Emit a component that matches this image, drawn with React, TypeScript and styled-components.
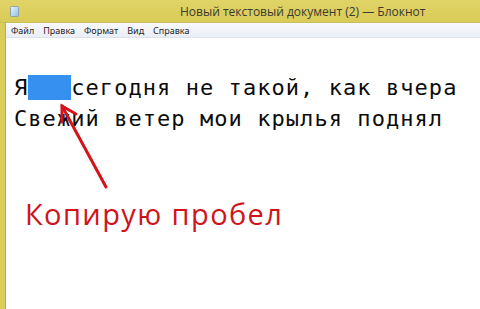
import React from "react";
import styled, { createGlobalStyle } from "styled-components";

const GlobalStyle = createGlobalStyle`
  html, body {
    margin: 0;
    padding: 0;
    background: #fff;
  }
`;

const Window = styled.div`
  position: relative;
  width: 480px;
  height: 309px;
  overflow: hidden;
  display: flex;
  flex-direction: column;
  background: #dacd5c;
`;

const TitleBar = styled.div`
  height: 22px;
  display: flex;
  align-items: center;
  padding-left: 10px;
  background: linear-gradient(#e0d468, #d9cb57);
  border-bottom: 1px solid #c9bd5c;
  font-family: "Open Sans", "Noto Sans", sans-serif;
  font-size: 12px;
  color: #3a3a30;
`;

const Title = styled.span`
  margin-left: 161px;
  white-space: nowrap;
`;

const Client = styled.div`
  flex: 1;
  margin-left: 5px;
  border-left: 1px solid #a6aa8a;
  display: flex;
  flex-direction: column;
  background: #fff;
`;

const MenuBar = styled.div`
  height: 14px;
  display: flex;
  align-items: center;
  padding-left: 1px;
  background: linear-gradient(#f8f9fb, #eaeef5);
  border-bottom: 1px solid #dde2ea;
  font-family: "Noto Sans", "Open Sans", sans-serif;
  font-size: 9px;
  color: #1e1e1e;
`;

const MenuItem = styled.span`
  padding: 0 4px;
  margin-right: 1px;
`;

const Editor = styled.div`
  flex: 1;
  padding: 34px 0 0 8px;
`;

const Line = styled.div`
  font-family: "DejaVu Sans Mono", "Liberation Mono", monospace;
  font-size: 22px;
  letter-spacing: 1.06px;
  line-height: 31px;
  height: 31px;
  white-space: pre;
  color: #0c0c0c;
`;

const Selection = styled.span`
  background: #3590f0;
`;

const Caption = styled.div`
  margin: 60px 0 0 11px;
  font-family: "Open Sans", "Noto Sans", sans-serif;
  font-size: 29px;
  letter-spacing: 1.4px;
  color: #d0141c;
  white-space: nowrap;
`;

const Overlay = styled.svg`
  position: absolute;
  left: 0;
  top: 0;
  pointer-events: none;
`;

const NotepadIcon = () => (
  <svg width="9" height="11" viewBox="0 0 9 11">
    <defs>
      <linearGradient id="np" x1="0" y1="0" x2="1" y2="1">
        <stop offset="0" stopColor="#e9f4fb" />
        <stop offset="1" stopColor="#8dc2e2" />
      </linearGradient>
    </defs>
    <rect x="0.5" y="0.5" width="8" height="10" rx="1" fill="url(#np)" stroke="#8aa3b3" />
  </svg>
);

const menu = ["Файл", "Правка", "Формат", "Вид", "Справка"];

export default function App() {
  return (
    <Window>
      <GlobalStyle />
      <TitleBar>
        <NotepadIcon />
        <Title>Новый текстовый документ (2) — Блокнот</Title>
      </TitleBar>
      <Client>
        <MenuBar>
          {menu.map(m => (
            <MenuItem key={m}>{m}</MenuItem>
          ))}
        </MenuBar>
        <Editor>
          <Line>
            Я<Selection>{"   "}</Selection>сегодня не такой, как вчера
          </Line>
          <Line>Свежий ветер мои крылья поднял</Line>
          <Caption>Копирую пробел</Caption>
        </Editor>
      </Client>
      <Overlay width="480" height="309">
        <g stroke="#d4141a" strokeWidth="3" strokeLinecap="round" fill="none">
          <line x1="106" y1="187" x2="62" y2="106" />
          <polyline points="76,114 62,106 62,122" />
        </g>
      </Overlay>
    </Window>
  );
}
